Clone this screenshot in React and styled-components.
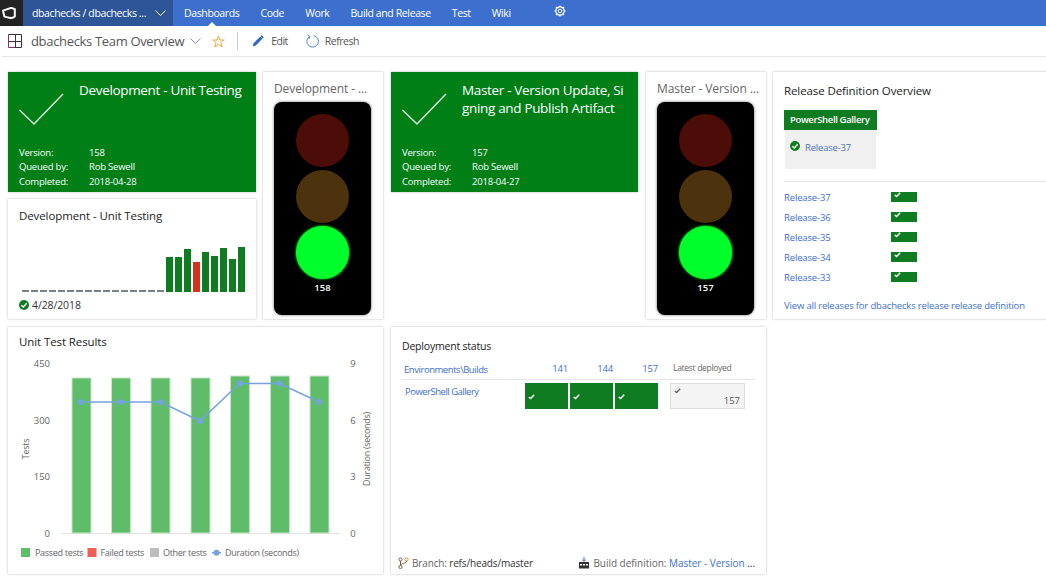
import React from 'react';
import styled, { createGlobalStyle } from 'styled-components';

const GlobalStyle = createGlobalStyle`
  html, body {
    margin: 0;
    height: 100%;
    overflow: hidden;
    background: #fff;
    font-family: "Open Sans", "Noto Sans", sans-serif;
  }
  * { box-sizing: border-box; }
`;

const Page = styled.div`
  width: 1046px;
  height: 580px;
  overflow: hidden;
`;

const NavBar = styled.div`
  display: flex;
  align-items: stretch;
  height: 26px;
  background: #3d70ce;
  color: #fff;
  font-size: 10.5px;
  letter-spacing: -0.38px;
`;

const LogoBox = styled.div`
  width: 23px;
  background: #232323;
  display: flex;
  align-items: center;
  justify-content: center;
  padding-right: 5px;
`;

const Project = styled.div`
  width: 150px;
  background: #2d5598;
  display: flex;
  align-items: center;
  justify-content: space-between;
  padding: 0 7px 0 9px;
  white-space: nowrap;
`;

const NavLinks = styled.div`
  display: flex;
  align-items: center;
  gap: 21px;
  padding-left: 11px;
`;

const NavLink = styled.div`
  position: relative;
  height: 100%;
  display: flex;
  align-items: center;
  white-space: nowrap;

  ${({ $active }) => $active && `
    &::after {
      content: '';
      position: absolute;
      left: 50%;
      bottom: 0;
      margin-left: -4px;
      border: 4px solid transparent;
      border-top: 0;
      border-bottom-color: #fff;
    }
  `}
`;

const GearSlot = styled.div`
  display: flex;
  align-items: center;
  margin: -5px 0 0 22px;
`;

const Toolbar = styled.div`
  display: flex;
  align-items: center;
  height: 31px;
  margin-left: 2px;
  padding-left: 6px;
  border-bottom: 1px solid #e6e6e6;
  color: #555;
  white-space: nowrap;
`;

const BoardName = styled.div`
  font-size: 13px;
  letter-spacing: -0.33px;
  margin: 0 6px 0 9px;
`;

const StarSlot = styled.div`
  display: flex;
  margin-left: 11px;
`;

const Separator = styled.div`
  width: 1px;
  height: 18px;
  background: #c8c8c8;
  margin: 0 14px 0 12px;
`;

const ToolButton = styled.div`
  display: flex;
  align-items: center;
  gap: ${({ $gap }) => $gap}px;
  font-size: 10.5px;
  letter-spacing: -0.5px;
  margin-right: 18px;
`;

const Board = styled.div`
  display: grid;
  grid-template-columns: 255px 128px 255px 127px 290px;
  grid-template-rows: 127px 128px 247px;
  padding: 15px 0 0 8px;
`;

const Tile = styled.div`
  grid-column: ${({ $col }) => $col};
  grid-row: ${({ $row }) => $row};
  width: ${({ $w }) => $w}px;
  height: ${({ $h }) => $h}px;
  background: #fff;
  box-shadow: 0 0 2px rgba(0, 0, 0, 0.3);
  overflow: hidden;
`;

const SummaryTile = styled(Tile)`
  background: #007f17;
  color: #fff;
  display: flex;
  flex-direction: column;
  justify-content: space-between;
  padding: 9px 11px 3px;
`;

const SummaryHead = styled.div`
  display: flex;
  align-items: flex-start;
`;

const SummaryTitle = styled.div`
  margin-left: 60px;
  font-size: 13.5px;
  line-height: 18px;
  font-weight: 500;
  letter-spacing: -0.33px;
  white-space: nowrap;
`;

const CheckSlot = styled.div`
  width: 0;
  height: 46px;
  margin-top: -1px;
`;

const Details = styled.div`
  display: grid;
  grid-template-columns: 70px auto;
  font-size: 9.5px;
  line-height: 14.3px;
  font-weight: 500;
  letter-spacing: -0.2px;
`;

const LightTile = styled(Tile)`
  padding: 8px 11px;
`;

const LightTitle = styled.div`
  font-size: 12px;
  line-height: 18px;
  height: 22px;
  color: #666;
  letter-spacing: -0.1px;
  white-space: nowrap;
`;

const LightBox = styled.div`
  width: 97px;
  height: 213px;
  background: #000;
  border-radius: 8px;
  box-shadow: 0 0 3px rgba(0, 0, 0, 0.6);
  display: flex;
  flex-direction: column;
  align-items: center;
  gap: 3px;
  padding-top: 12px;
`;

const Lamp = styled.div`
  width: 53px;
  height: 53px;
  border-radius: 50%;
  background: ${({ $color }) => $color};
  ${({ $glow }) => $glow && `box-shadow: 0 0 3px ${$glow};`}
`;

const LightLabel = styled.div`
  color: #fff;
  font-size: 9.5px;
  line-height: 14px;
  font-weight: 600;
  margin-top: -1px;
`;

const HistoryTile = styled(Tile)`
  padding: 8px 11px;
  display: flex;
  flex-direction: column;
`;

const TileTitle = styled.div`
  font-size: 11.5px;
  line-height: 18px;
  color: #222;
  letter-spacing: -0.1px;
  white-space: nowrap;
`;

const DeployTitle = styled(TileTitle)`
  font-size: 10.5px;
  letter-spacing: -0.2px;
`;

const Bars = styled.div`
  display: flex;
  align-items: flex-end;
  gap: 2px;
  height: 45px;
  margin: 22px 0 0 3px;
`;

const Bar = styled.div`
  width: 7px;
  height: ${({ $h }) => $h}px;
  background: ${({ $color }) => $color};
`;

const BuildDate = styled.div`
  display: flex;
  align-items: center;
  gap: 3px;
  margin-top: 6px;
  font-size: 10.5px;
  line-height: 14px;
  color: #333;
  letter-spacing: -0.1px;
`;

const ChartTile = styled(Tile)`
  padding: 6px 11px 0;
`;

const ChartSvg = styled.svg`
  display: block;
  margin: 0 0 0 -11px;
  font-family: "Open Sans", "Noto Sans", sans-serif;
  font-size: 9.5px;
  fill: #666;
`;

const ChartNote = styled.text`
  font-size: 9px;
  letter-spacing: -0.3px;
`;

const DeployTile = styled(Tile)`
  padding: 10px 11px 0 11px;
  display: flex;
  flex-direction: column;
`;

const DeployHead = styled.div`
  display: grid;
  grid-template-columns: 121px repeat(3, 45px) auto;
  align-items: center;
  height: 21px;
  margin-top: 4px;
  padding-left: 2px;
  border-bottom: 1px solid #e6e6e6;
  font-size: 9.5px;
  letter-spacing: -0.45px;
  color: #3d6fcf;
  white-space: nowrap;
`;

const BuildNumber = styled.div`
  text-align: right;
  padding-right: 2px;
  letter-spacing: -0.15px;
  margin-top: -1px;
`;

const LatestHead = styled.div`
  color: #666;
  font-size: 8.5px;
  letter-spacing: -0.3px;
  margin: -3px 0 0 13px;
`;

const DeployRow = styled.div`
  display: flex;
  padding-top: 3px;
`;

const EnvLink = styled.div`
  width: 123px;
  padding: 0 0 0 3px;
  font-size: 9.5px;
  line-height: 18px;
  letter-spacing: -0.5px;
  color: #3d6fcf;
  white-space: nowrap;
`;

const Cells = styled.div`
  display: flex;
  gap: 2px;
`;

const DeployCell = styled.div`
  width: 43px;
  height: 26px;
  background: #107c22;
  padding: 0 0 0 3px;
`;

const LatestCell = styled.div`
  width: 75px;
  height: 26px;
  margin-left: 12px;
  background: #f4f4f4;
  border: 1px solid #ddd;
  padding: 1px 4px 0 3px;
  color: #555;
  font-size: 9.5px;
  line-height: 11px;
  text-align: right;
`;

const LatestCheck = styled.div`
  text-align: left;
  height: 10px;
`;

const DeployFooter = styled.div`
  margin-top: auto;
  margin-left: -4px;
  height: 22px;
  display: flex;
  align-items: center;
  justify-content: space-between;
  font-size: 10px;
  white-space: nowrap;
  color: #333;
`;

const FooterPart = styled.div`
  display: flex;
  align-items: center;
  gap: 3px;
  letter-spacing: ${({ $tight }) => ($tight ? '-0.15px' : '-0.03px')};
`;

const Muted = styled.span`
  color: #666;
`;

const LinkText = styled.span`
  color: #3d6fcf;
`;

const ReleaseTile = styled(Tile)`
  padding: 10px 11px;
  color: #222;
`;

const EnvCard = styled.div`
  width: 93px;
  margin-top: 10px;
`;

const EnvHeader = styled.div`
  height: 20px;
  background: #107c22;
  color: #fff;
  padding-left: 6px;
  font-size: 9.5px;
  line-height: 20px;
  font-weight: 600;
  letter-spacing: -0.35px;
  white-space: nowrap;
`;

const EnvBody = styled.div`
  height: 39px;
  margin: 0 1px;
  background: #f0f0f0;
  padding: 11px 0 0 5px;
  display: flex;
  align-items: flex-start;
  gap: 5px;
  font-size: 9.5px;
  line-height: 14px;
  letter-spacing: -0.2px;
  color: #4f74b8;
`;

const Divider = styled.div`
  height: 1px;
  background: #e6e6e6;
  margin: 12px -11px 5px 0;
`;

const ReleaseRow = styled.div`
  display: flex;
  align-items: center;
  height: 20px;
  font-size: 9.5px;
  letter-spacing: -0.15px;
  color: #3d6fcf;
`;

const ReleaseName = styled.div`
  width: 107px;
`;

const Badge = styled.div`
  width: 26px;
  height: 10px;
  background: #107c22;
  padding-left: 3px;
  display: flex;
  align-items: flex-start;
`;

const AllReleases = styled.div`
  margin-top: 12px;
  font-size: 9.5px;
  line-height: 14px;
  letter-spacing: -0.17px;
  color: #3d6fcf;
  white-space: nowrap;
`;

const TinyCheck = ({ color = '#fff' }) => (
  <svg width="7" height="6" viewBox="0 0 7 6" fill="none">
    <path d="M0.8 3 L2.6 4.6 L6.2 0.8" stroke={color} strokeWidth="1.4" />
  </svg>
);

const StatusIcon = () => (
  <svg width="10" height="10" viewBox="0 0 10 10" fill="none">
    <circle cx="5" cy="5" r="5" fill="#107c22" />
    <path d="M2.4 5.2 L4.3 7 L7.7 3.3" stroke="#fff" strokeWidth="1.4" />
  </svg>
);

const Chevron = ({ color, w = 11 }) => (
  <svg width={w} height="6" viewBox="0 0 11 6" fill="none">
    <path d="M0.5 0.5 L5.5 5.5 L10.5 0.5" stroke={color} strokeWidth="1" />
  </svg>
);

const BigCheck = () => (
  <CheckSlot>
    <svg width="46" height="46" viewBox="0 0 46 46" fill="none">
      <path d="M0.5 30 L15 44 L44 14" stroke="#d9ecd9" strokeWidth="1.5" />
    </svg>
  </CheckSlot>
);

const Summary = ({ col, title, version, date }) => (
  <SummaryTile $col={col} $row="1" $w={col === 1 ? 248 : 247} $h={120}>
    <SummaryHead>
      <BigCheck />
      <SummaryTitle>{title}</SummaryTitle>
    </SummaryHead>
    <Details>
      <div>Version:</div><div>{version}</div>
      <div>Queued by:</div><div>Rob Sewell</div>
      <div>Completed:</div><div>{date}</div>
    </Details>
  </SummaryTile>
);

const TrafficLight = ({ col, title, label }) => (
  <LightTile $col={col} $row="1 / span 2" $w={120} $h={247}>
    <LightTitle>{title}</LightTitle>
    <LightBox>
      <Lamp $color="#4c0d08" />
      <Lamp $color="#4c330d" />
      <Lamp $color="#00ff2a" $glow="#00ff2a" />
      <LightLabel>{label}</LightLabel>
    </LightBox>
  </LightTile>
);

const HISTORY = [35, 35, 43, 30, 40, 36, 44, 33, 45];

const ChartArea = () => {
  // coordinates are relative to the tile
  const barX = [64, 103.5, 143, 183, 222.5, 262.5, 302];
  const barTop = [51, 51, 51, 51, 49, 49, 49];
  const line = [[72.5, 75], [112.5, 75], [152.5, 75], [192, 94], [231.5, 56.5], [271.5, 56.5], [311, 75]];
  return (
    <ChartSvg width="375" height="223" viewBox="0 24 375 223">
      {[['450', 36], ['300', 93], ['150', 149], ['0', 206.5]].map(([t, y]) => (
        <text key={t} x="42" y={y + 3.5} textAnchor="end">{t}</text>
      ))}
      {[['9', 36], ['6', 93], ['3', 149], ['0', 206.5]].map(([t, y]) => (
        <text key={y} x="345" y={y + 3.5} textAnchor="middle">{t}</text>
      ))}
      <ChartNote transform="translate(20.5 122) rotate(-90)" textAnchor="middle">Tests</ChartNote>
      <ChartNote transform="translate(361.5 122) rotate(-90)" textAnchor="middle">Duration (seconds)</ChartNote>
      <rect x="53" y="206" width="279" height="1" fill="#e3e3e3" />
      {barX.map((x, i) => (
        <rect key={x} x={x} y={barTop[i]} width="19" height={206 - barTop[i]} fill="#5fbd6a" stroke="#c4e6c8" strokeWidth="1" />
      ))}
      <polyline points={line.map(p => p.join(',')).join(' ')} fill="none" stroke="#74a3de" strokeWidth="1.5" />
      {line.map(([x, y]) => <circle key={x} cx={x} cy={y} r="3" fill="#74a3de" />)}
      <rect x="13" y="221" width="9" height="9" fill="#5fbd6a" />
      <ChartNote x="27" y="229">Passed tests</ChartNote>
      <rect x="79.5" y="221" width="9" height="9" fill="#ee5f57" />
      <ChartNote x="92.5" y="229">Failed tests</ChartNote>
      <rect x="142" y="221" width="9" height="9" fill="#bdbdbd" />
      <ChartNote x="155" y="229">Other tests</ChartNote>
      <rect x="204" y="225" width="9" height="1.5" fill="#74a3de" />
      <circle cx="208.5" cy="225.7" r="3" fill="#74a3de" />
      <ChartNote x="217" y="229">Duration (seconds)</ChartNote>
    </ChartSvg>
  );
};

const App = () => (
  <Page>
    <GlobalStyle />
    <NavBar>
      <LogoBox>
        <svg width="14" height="12" viewBox="0 0 14 12" fill="none">
          <path d="M1 3.6 L9.4 0.8 L12.8 2.2 V9.6 L9.4 11.2 L2.4 9.6 Z" stroke="#fff" strokeWidth="2" strokeLinejoin="round" />
        </svg>
      </LogoBox>
      <Project>
        dbachecks / dbachecks ...
        <Chevron color="#fff" />
      </Project>
      <NavLinks>
        <NavLink $active>Dashboards</NavLink>
        <NavLink>Code</NavLink>
        <NavLink>Work</NavLink>
        <NavLink>Build and Release</NavLink>
        <NavLink>Test</NavLink>
        <NavLink>Wiki</NavLink>
        <GearSlot>
          <svg width="12" height="12" viewBox="0 0 12 12" fill="none" stroke="#fff">
            <circle cx="6" cy="6" r="1.8" strokeWidth="1" />
            <circle cx="6" cy="6" r="4.2" strokeWidth="1.2" />
            <path d="M6 0.4 V2 M6 10 V11.6 M0.4 6 H2 M10 6 H11.6 M2 2 L3.1 3.1 M8.9 8.9 L10 10 M2 10 L3.1 8.9 M8.9 3.1 L10 2" strokeWidth="1.2" />
          </svg>
        </GearSlot>
      </NavLinks>
    </NavBar>
    <Toolbar>
      <svg width="14" height="14" viewBox="0 0 14 14" fill="none" strokeWidth="1">
        <path d="M0.5 0.5 V13.5 H7" stroke="#8a2a7c" />
        <path d="M0.5 0.5 H13.5 V13.5 H7 M7.5 0.5 V7.5 M0.5 7.5 H13.5 M7.5 7.5 V13.5" stroke="#3a3040" />
      </svg>
      <BoardName>dbachecks Team Overview</BoardName>
      <Chevron color="#7a93c8" />
      <StarSlot>
        <svg width="13" height="13" viewBox="0 0 13 13" fill="none">
          <path d="M6.5 1 L8 5 L12.3 5 L8.9 7.6 L10.2 12 L6.5 9.4 L2.8 12 L4.1 7.6 L0.7 5 L5 5 Z" stroke="#f0a93a" strokeWidth="1" />
        </svg>
      </StarSlot>
      <Separator />
      <ToolButton $gap={7}>
        <svg width="12" height="12" viewBox="0 0 12 12" fill="none">
          <path d="M0.6 11.4 L1.6 8.2 L8.4 1.4 L10.6 3.6 L3.8 10.4 Z" fill="#2f64c8" />
          <path d="M9.2 0.6 L11.4 2.8" stroke="#1d3f86" strokeWidth="1.2" />
        </svg>
        Edit
      </ToolButton>
      <ToolButton $gap={6}>
        <svg width="13" height="14" viewBox="0 0 13 14" fill="none" stroke="#4f86d8" strokeWidth="1">
          <path d="M3.6 2.4 A5.8 5.8 0 1 0 7.5 1.6" />
          <path d="M1.5 1 L3.8 2.4 L3 5" />
        </svg>
        Refresh
      </ToolButton>
    </Toolbar>
    <Board>
      <Summary col={1} title="Development - Unit Testing" version="158" date="2018-04-28" />
      <TrafficLight col={2} title="Development - ..." label="158" />
      <Summary
        col={3}
        title={<>Master - Version Update, Si<br />gning and Publish Artifact</>}
        version="157"
        date="2018-04-27"
      />
      <TrafficLight col={4} title="Master - Version ..." label="157" />
      <ReleaseTile $col={5} $row="1 / span 2" $w={290} $h={247}>
        <TileTitle>Release Definition Overview</TileTitle>
        <EnvCard>
          <EnvHeader>PowerShell Gallery</EnvHeader>
          <EnvBody>
            <StatusIcon />
            Release-37
          </EnvBody>
        </EnvCard>
        <Divider />
        {[37, 36, 35, 34, 33].map(n => (
          <ReleaseRow key={n}>
            <ReleaseName>Release-{n}</ReleaseName>
            <Badge><TinyCheck /></Badge>
          </ReleaseRow>
        ))}
        <AllReleases>View all releases for dbachecks release release definition</AllReleases>
      </ReleaseTile>
      <HistoryTile $col={1} $row="2" $w={248} $h={120}>
        <TileTitle>Development - Unit Testing</TileTitle>
        <Bars>
          {Array.from({ length: 16 }, (_, i) => <Bar key={i} $h={2} $color="#7a8288" />)}
          {HISTORY.map((h, i) => <Bar key={i} $h={h} $color={i === 3 ? '#d9301a' : '#107c22'} />)}
        </Bars>
        <BuildDate>
          <StatusIcon />
          4/28/2018
        </BuildDate>
      </HistoryTile>
      <ChartTile $col="1 / span 2" $row="3" $w={375} $h={247}>
        <TileTitle>Unit Test Results</TileTitle>
        <ChartArea />
      </ChartTile>
      <DeployTile $col="3 / span 2" $row="3" $w={375} $h={247}>
        <DeployTitle>Deployment status</DeployTitle>
        <DeployHead>
          <div>Environments\Builds</div>
          <BuildNumber>141</BuildNumber>
          <BuildNumber>144</BuildNumber>
          <BuildNumber>157</BuildNumber>
          <LatestHead>Latest deployed</LatestHead>
        </DeployHead>
        <DeployRow>
          <EnvLink>PowerShell Gallery</EnvLink>
          <Cells>
            <DeployCell><TinyCheck /></DeployCell>
            <DeployCell><TinyCheck /></DeployCell>
            <DeployCell><TinyCheck /></DeployCell>
          </Cells>
          <LatestCell>
            <LatestCheck><TinyCheck color="#666" /></LatestCheck>
            157
          </LatestCell>
        </DeployRow>
        <DeployFooter>
          <FooterPart $tight>
            <svg width="11" height="12" viewBox="0 0 11 12" fill="none" stroke="#7a5a50" strokeWidth="1">
              <circle cx="2.5" cy="2.5" r="1.6" />
              <circle cx="8.5" cy="2.5" r="1.6" stroke="#d08a40" />
              <circle cx="2.5" cy="10" r="1.6" />
              <path d="M2.5 4 V8.4 M8.5 4 C8.5 6.5 3 6 2.5 8.4" />
            </svg>
            <span><Muted>Branch:</Muted> refs/heads/master</span>
          </FooterPart>
          <FooterPart>
            <svg width="12" height="12" viewBox="0 0 12 12">
              <path d="M6 0 V4 M4.4 2.6 L6 4.4 L7.6 2.6" stroke="#3a6fb0" fill="none" />
              <path d="M1 5 H11 V11.5 H1 Z" fill="#333" />
              <path d="M2 7 H4 V8.5 H2 Z M5 7 H7 V8.5 H5 Z M8 7 H10 V8.5 H8 Z" fill="#fff" />
            </svg>
            <span><Muted>Build definition:</Muted> <LinkText>Master - Version</LinkText> ...</span>
          </FooterPart>
        </DeployFooter>
      </DeployTile>
    </Board>
  </Page>
);

export default App;
